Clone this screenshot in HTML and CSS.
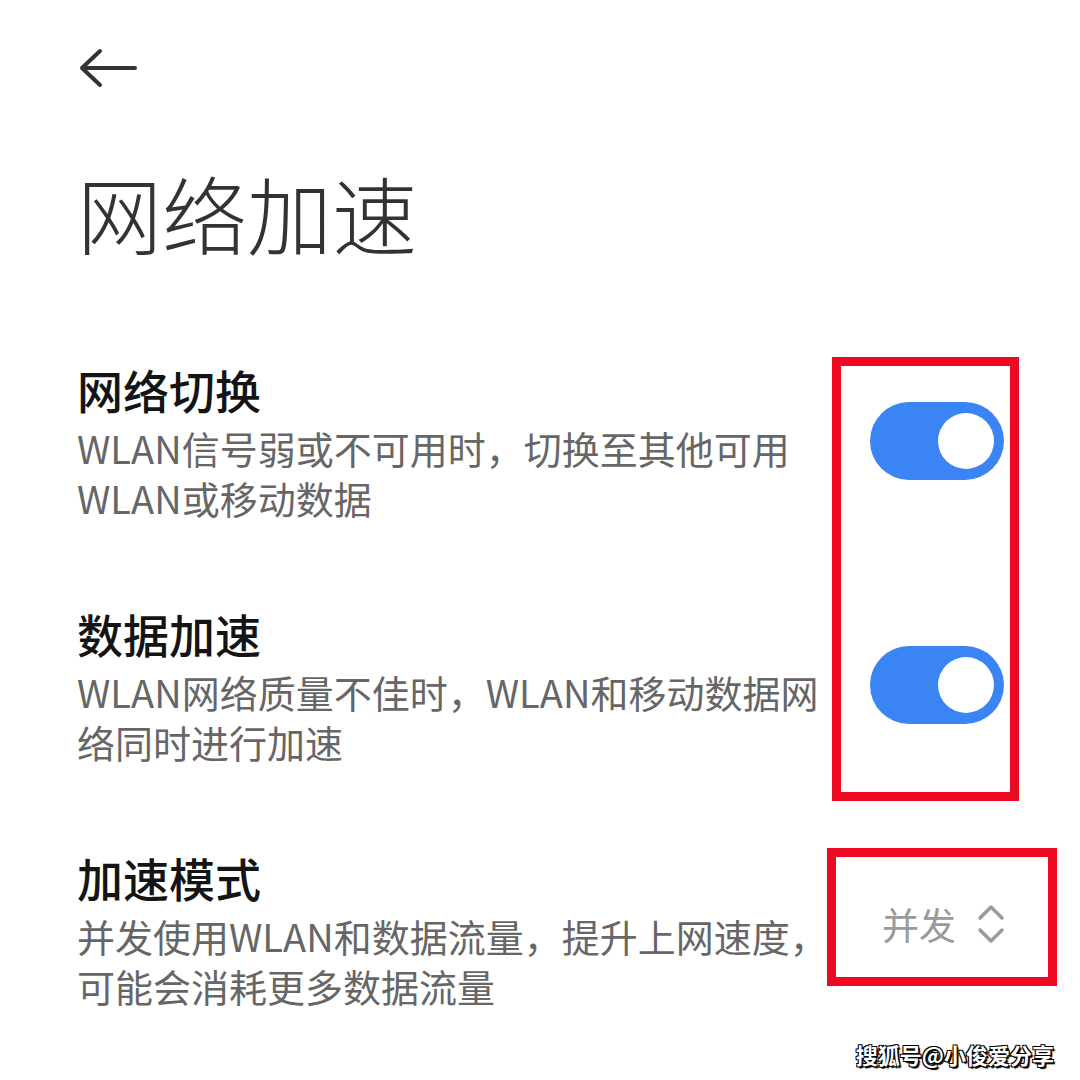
FILE: index.html
```html
<!DOCTYPE html>
<html lang="zh-CN">
<head>
    <meta charset="UTF-8">
    <meta name="viewport" content="width=device-width, initial-scale=1.0">
    <title>网络加速</title>
    <link rel="stylesheet" href="styles.css">
</head>
<body>
    <div class="page">
        <header class="topbar">
            <svg class="back" width="60" height="42" viewBox="0 0 60 42">
                <path d="M57 21H4M22 4L4 21l18 17" fill="none" stroke="#333" stroke-width="4" stroke-linecap="round" stroke-linejoin="round"/>
            </svg>
        </header>

        <h1 class="title">网络加速</h1>

        <div class="list">
            <div class="row">
                <div class="text">
                    <div class="row-title">网络切换</div>
                    <div class="row-sub">WLAN信号弱或不可用时，切换至其他可用<br>WLAN或移动数据</div>
                </div>
                <div class="switch on"><span class="knob"></span></div>
            </div>

            <div class="row">
                <div class="text">
                    <div class="row-title">数据加速</div>
                    <div class="row-sub">WLAN网络质量不佳时，WLAN和移动数据网<br>络同时进行加速</div>
                </div>
                <div class="switch on"><span class="knob"></span></div>
            </div>

            <div class="row">
                <div class="text">
                    <div class="row-title">加速模式</div>
                    <div class="row-sub">并发使用WLAN和数据流量，提升上网速度，<br>可能会消耗更多数据流量</div>
                </div>
                <div class="picker">
                    <span class="picker-value">并发</span>
                    <svg width="30" height="46" viewBox="0 0 30 46">
                        <path d="M4 17L15 6l11 11M4 29l11 11 11-11" fill="none" stroke="#9a9a9a" stroke-width="3.5" stroke-linecap="round" stroke-linejoin="round"/>
                    </svg>
                </div>
            </div>
        </div>

        <!-- annotation frames drawn over the screenshot -->
        <div class="mark mark-switches"></div>
        <div class="mark mark-picker"></div>

        <div class="watermark">搜狐号@小俊爱分享</div>
    </div>
</body>
</html>
```

FILE: styles.css
```css
:root {
    --blue: #3a84f4;
    --title-color: #333;
    --label-color: #141414;
    --sub-color: #666;
    --mark-red: #ee0a22;
}

* {
    margin: 0;
    padding: 0;
    box-sizing: border-box;
}

body {
    font-family: "Noto Sans CJK SC", "Noto Sans", sans-serif;
    background-color: #fff;
}

.page {
    position: relative;
    width: 1080px;
    height: 1080px;
    overflow: hidden;
    padding: 0 76px 0 77px;
}

.topbar {
    height: 110px;
    padding-top: 47px;
}

.back {
    display: block;
    margin-left: 1px;
}

.title {
    font-size: 85px;
    font-weight: 300;
    line-height: 103px;
    color: var(--title-color);
    margin-top: 50px;
    margin-bottom: 56px;
}

.row {
    display: flex;
    align-items: center;
    justify-content: space-between;
    padding: 40px 0;
}

.row-title {
    font-size: 46px;
    font-weight: 500;
    line-height: 60px;
    color: var(--label-color);
    margin-bottom: 4px;
}

.row-sub {
    font-size: 38px;
    line-height: 50px;
    color: var(--sub-color);
    white-space: nowrap;
}

.switch {
    position: relative;
    width: 134px;
    height: 78px;
    border-radius: 39px;
    background-color: var(--blue);
    flex-shrink: 0;
}

.knob {
    position: absolute;
    top: 11px;
    right: 10px;
    width: 56px;
    height: 56px;
    border-radius: 50%;
    background-color: #fff;
}

.picker {
    display: flex;
    align-items: center;
    gap: 20px;
    margin-right: -2px;
    margin-bottom: 10px;
}

.picker-value {
    font-size: 37px;
    line-height: 1;
    color: #9a9a9a;
}

.picker svg {
    display: block;
}

.mark {
    position: absolute;
    border: 9px solid var(--mark-red);
}

.mark-switches {
    left: 832px;
    top: 357px;
    width: 187px;
    height: 444px;
}

.mark-picker {
    left: 827px;
    top: 848px;
    width: 230px;
    height: 138px;
}

.watermark {
    position: absolute;
    right: 26px;
    bottom: 10px;
    font-size: 22px;
    font-weight: 700;
    color: #fff;
    text-shadow: 1px 1px 0 #000, -1px -1px 0 #000, 1px -1px 0 #000, -1px 1px 0 #000, 2px 2px 1px #000;
}
```
